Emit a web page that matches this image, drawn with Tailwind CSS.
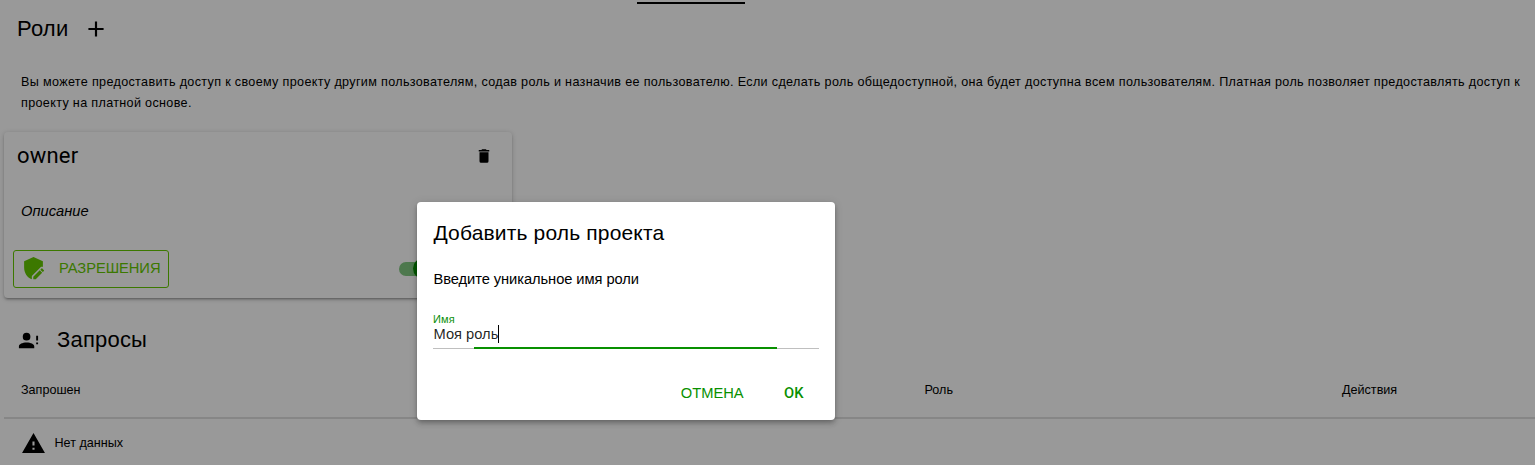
<!DOCTYPE html>
<html lang="ru">
<head>
<meta charset="utf-8">
<title>Роли</title>
<script src="https://cdn.jsdelivr.net/npm/@tailwindcss/browser@4"></script>
</head>
<body class="relative h-[465px] w-[1535px] overflow-hidden bg-white font-['Liberation_Sans',sans-serif] text-black">
<main class="flex h-[465px] flex-col *:shrink-0">
  <div class="h-1 pt-0.5 pl-[637px]"><div class="h-0.5 w-[108px] bg-black"></div></div>
  <header class="flex h-[48px] items-center pl-[17px]">
    <h1 class="w-[66px] text-[22px] leading-[33px] tracking-[0.2px]">Роли</h1>
    <svg class="mt-0.5 size-[26px]" viewBox="0 0 24 24" fill="currentColor"><path d="M19 13h-6v6h-2v-6H5v-2h6V5h2v6h6v2z"/></svg>
  </header>
  <p class="mt-[20px] h-[42px] pr-2 pl-[21px] text-[12.6px] leading-[21px] tracking-[0.332px]">Вы можете предоставить доступ к своему проекту другим пользователям, содав роль и назначив ее пользователю. Если сделать роль общедоступной, она будет доступна всем пользователям. Платная роль позволяет предоставлять доступ к проекту на платной основе.</p>
  <section class="mt-[18px] ml-1 flex h-[166px] w-[508px] flex-col rounded-[4px] bg-white shadow-[0_1px_5px_rgba(0,0,0,0.2),0_2px_2px_rgba(0,0,0,0.14),0_3px_1px_-2px_rgba(0,0,0,0.12)]">
    <div class="flex h-[48px] items-center justify-between pr-[19px] pl-[13px]">
      <h2 class="mb-0.5 font-[Roboto] text-[22px] leading-[33px] tracking-[0.2px]">owner</h2>
      <svg class="size-[18px]" viewBox="0 0 24 24" fill="currentColor"><path d="M19,4H15.5L14.5,3H9.5L8.5,4H5V6H19M6,19A2,2 0 0,0 8,21H16A2,2 0 0,0 18,19V7H6V19Z"/></svg>
    </div>
    <p class="mt-[21px] pl-[17px] text-[14.7px] leading-[21px] italic">Описание</p>
    <div class="mt-[28px] flex items-center justify-between pr-[84px] pl-[9px]">
      <button class="flex h-[38px] w-[156px] items-center rounded-[3px] border border-[#64c800] pl-[7px] text-[14.7px] text-[#64c800]">
        <svg class="-mt-0.5 mr-[13px] size-[25px]" viewBox="0 0 24 24" fill="currentColor"><path d="M22,14.35L20.9,15.45L18.55,13.1L19.65,12C19.86,11.8 20.21,11.8 20.42,12L22,13.58C22.2,13.79 22.2,14.14 22,14.35M11.8,19.84V22.2H14.16L20.32,16.03L17.97,13.68L11.8,19.84M10.4,19.3L18.8,10.9C19.5,10.4 20.3,10.3 21,10.6V5L12,1L3,5V11C3,16 5.8,20.7 10.4,22.4V19.3Z"/></svg>
        <span class="mb-0.5 tracking-[-0.05px]">РАЗРЕШЕНИЯ</span>
      </button>
      <div class="flex h-[14px] w-[29px] rounded-full bg-[#80c880]"><div class="-mt-1 ml-[14px] size-[21px] shrink-0 rounded-full bg-[#089000]"></div></div>
    </div>
  </section>
  <div class="mt-[17px] flex h-[48px] items-center pl-[16.5px]">
    <svg class="mt-0.5 mr-[17.5px] size-[23px]" viewBox="0 0 24 24" fill="currentColor"><path d="M10 4A4 4 0 0 1 14 8A4 4 0 0 1 10 12A4 4 0 0 1 6 8A4 4 0 0 1 10 4M10 14C14.42 14 18 15.79 18 18V20H2V18C2 15.79 5.58 14 10 14M20 12V7H22V12H20M20 16V14H22V16H20Z"/></svg>
    <h2 class="text-[22px] leading-[33px] tracking-[0.2px]">Запросы</h2>
  </div>
  <div class="ml-1 flex h-[56px] items-center border-b-2 border-[#e0e0e0] pl-[17px] text-[12.6px]">
    <span class="w-[903.5px]">Запрошен</span><span class="w-[417.5px]">Роль</span><span>Действия</span>
  </div>
  <div class="flex h-[48px] items-center pl-[21px] text-[12.6px]">
    <svg class="mr-[8.5px] size-[25px]" viewBox="0 0 24 24" fill="currentColor"><path d="M1 21h22L12 2 1 21zm12-3h-2v-2h2v2zm0-4h-2v-4h2v4z"/></svg>
    <span>Нет данных</span>
  </div>
</main>
<div class="absolute inset-0 bg-black/40">
  <div role="dialog" class="mt-[202px] ml-[417px] flex h-[218px] w-[418px] flex-col rounded-[4px] bg-white px-4 shadow-[0_2px_4px_-1px_rgba(0,0,0,0.2),0_4px_5px_rgba(0,0,0,0.14),0_1px_10px_rgba(0,0,0,0.12)]">
    <h2 class="mt-[14px] pl-[0.5px] text-[21px] leading-[34px] tracking-[0.16px]">Добавить роль проекта</h2>
    <p class="mt-[18px] pl-[0.5px] text-[14.7px] leading-[22px] tracking-[-0.07px]">Введите уникальное имя роли</p>
    <label class="mt-[22px] h-[10px] text-[11px] leading-[14px] tracking-[0.1px] text-[#0a8f08]">Имя</label>
    <div class="flex h-[24px] items-center pl-[0.5px] text-[14.7px] text-black/87"><span>Моя роль</span><i class="h-[18px] w-px bg-black"></i></div>
    <div class="flex h-[3px] items-end border-b border-black/25"><div class="-mb-px ml-[41px] h-0.5 w-[303px] bg-[#089000]"></div></div>
    <div class="mt-[34px] flex h-[20px] items-center justify-end pr-[15.5px] text-[14.7px] text-[#089000]">
      <button class="mr-[40.5px]">ОТМЕНА</button>
      <button class="font-[Roboto] font-medium">OK</button>
    </div>
  </div>
</div>
</body>
</html>
